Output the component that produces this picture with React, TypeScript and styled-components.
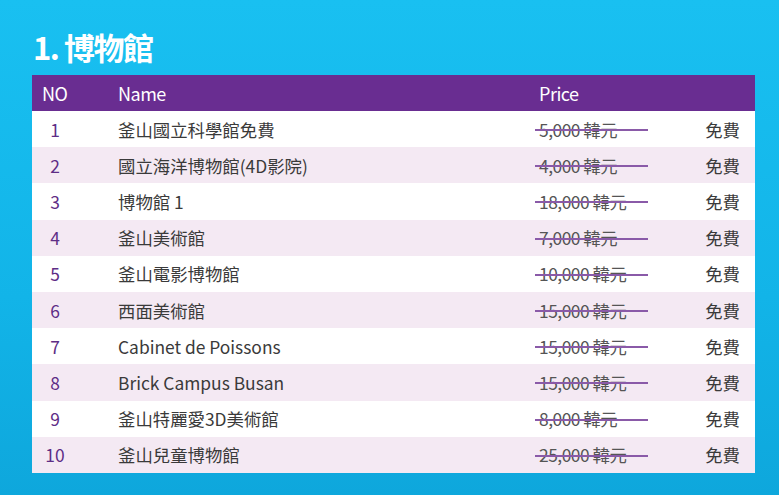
import styled, { createGlobalStyle } from "styled-components";

const GlobalStyle = createGlobalStyle`
  html, body {
    margin: 0;
    padding: 0;
  }
  body {
    font-family: "Noto Sans CJK TC", "Noto Sans", sans-serif;
  }
`;

const Page = styled.div`
  width: 779px;
  height: 495px;
  box-sizing: border-box;
  padding: 26px 24px 0 32px;
  background: linear-gradient(180deg, #19c0f1 0%, #12b4e8 60%, #0ea7dc 100%);
  overflow: hidden;
`;

const Title = styled.h1`
  margin: 0 0 8px 1px;
  font-size: 31px;
  line-height: 41px;
  font-weight: 700;
  color: #ffffff;
  letter-spacing: -1.5px;
`;

const Table = styled.div`
  width: 723px;
  display: flex;
  flex-direction: column;
`;

const Row = styled.div<{ $alt?: boolean }>`
  display: grid;
  grid-template-columns: 86px 417px 1fr auto;
  align-items: center;
  height: 36.2px;
  padding-right: 15px;
  background: ${(p) => (p.$alt ? "#f4e9f3" : "#ffffff")};
  color: #3a3a3a;
  font-size: 17.4px;
`;

const HeadRow = styled(Row)`
  height: 36px;
  background: #692d91;
  color: #ffffff;
  font-size: 18px;
`;

const HeadCell = styled.div<{ $pad?: number }>`
  padding-left: ${(p) => p.$pad ?? 0}px;
  letter-spacing: -0.5px;
`;

const No = styled.div`
  width: 46px;
  text-align: center;
  color: #5e2d86;
`;

const Name = styled.div`
  white-space: nowrap;
`;

const Price = styled.div`
  position: relative;
  box-sizing: border-box;
  width: 113px;
  padding-left: 4px;
  color: #555;
  letter-spacing: -0.5px;
  white-space: nowrap;

  &::after {
    content: "";
    position: absolute;
    left: 0;
    right: 0;
    top: 50%;
    height: 2px;
    background: #8a5aa8;
  }
`;

const Free = styled.div`
  text-align: right;
`;

const items: [string, string][] = [
  ["釜山國立科學館免費", "5,000"],
  ["國立海洋博物館(4D影院)", "4,000"],
  ["博物館 1", "18,000"],
  ["釜山美術館", "7,000"],
  ["釜山電影博物館", "10,000"],
  ["西面美術館", "15,000"],
  ["Cabinet de Poissons", "15,000"],
  ["Brick Campus Busan", "15,000"],
  ["釜山特麗愛3D美術館", "8,000"],
  ["釜山兒童博物館", "25,000"],
];

export default function App() {
  return (
    <Page>
      <GlobalStyle />
      <Title>1. 博物館</Title>
      <Table>
        <HeadRow>
          <HeadCell $pad={10}>NO</HeadCell>
          <HeadCell>Name</HeadCell>
          <HeadCell $pad={4}>Price</HeadCell>
          <HeadCell />
        </HeadRow>
        {items.map(([name, price], i) => (
          <Row key={i} $alt={i % 2 === 1}>
            <No>{i + 1}</No>
            <Name>{name}</Name>
            <Price>{price} 韓元</Price>
            <Free>免費</Free>
          </Row>
        ))}
      </Table>
    </Page>
  );
}
